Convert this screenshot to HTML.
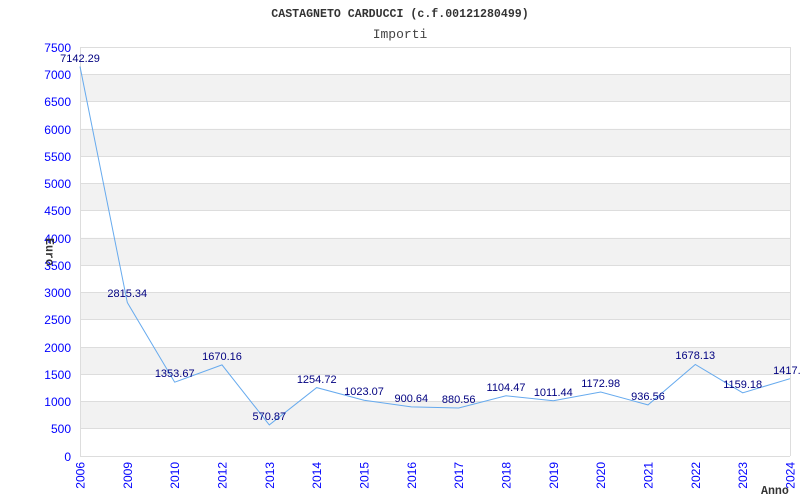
<!DOCTYPE html>
<html><head><meta charset="utf-8"><style>body{margin:0;background:#fff}svg{display:block}</style></head><body>
<svg width="800" height="500" xmlns="http://www.w3.org/2000/svg">
<text x="400" y="17" text-anchor="middle" font-family="Liberation Mono, monospace" font-weight="bold" font-size="11.6" fill="#333">CASTAGNETO CARDUCCI (c.f.00121280499)</text>
<text x="400" y="38" text-anchor="middle" font-family="Liberation Mono, monospace" font-size="13" fill="#444">Importi</text>
<g fill="#f2f2f2">
<rect x="80" y="401.5" width="710" height="27.3"/>
<rect x="80" y="347" width="710" height="27.3"/>
<rect x="80" y="292.4" width="710" height="27.3"/>
<rect x="80" y="237.8" width="710" height="27.3"/>
<rect x="80" y="183.3" width="710" height="27.3"/>
<rect x="80" y="128.8" width="710" height="27.3"/>
<rect x="80" y="74.2" width="710" height="27.3"/>
</g>
<g stroke="#ddd" stroke-width="1">
<line x1="80" x2="790" y1="47.5" y2="47.5"/><line x1="80" x2="790" y1="74.5" y2="74.5"/><line x1="80" x2="790" y1="101.5" y2="101.5"/><line x1="80" x2="790" y1="129.5" y2="129.5"/><line x1="80" x2="790" y1="156.5" y2="156.5"/><line x1="80" x2="790" y1="183.5" y2="183.5"/><line x1="80" x2="790" y1="210.5" y2="210.5"/><line x1="80" x2="790" y1="238.5" y2="238.5"/><line x1="80" x2="790" y1="265.5" y2="265.5"/><line x1="80" x2="790" y1="292.5" y2="292.5"/><line x1="80" x2="790" y1="319.5" y2="319.5"/><line x1="80" x2="790" y1="347.5" y2="347.5"/><line x1="80" x2="790" y1="374.5" y2="374.5"/><line x1="80" x2="790" y1="401.5" y2="401.5"/><line x1="80" x2="790" y1="428.5" y2="428.5"/>
<line x1="80.5" x2="80.5" y1="47" y2="456"/><line x1="790.5" x2="790.5" y1="47" y2="456"/><line x1="80" x2="790" y1="456.5" y2="456.5"/>
</g>
<g font-family="Liberation Sans, sans-serif" font-size="12" fill="#0000ff" text-anchor="end">
<text x="71" y="52">7500</text><text x="71" y="79">7000</text><text x="71" y="106">6500</text><text x="71" y="134">6000</text><text x="71" y="161">5500</text><text x="71" y="188">5000</text><text x="71" y="215">4500</text><text x="71" y="243">4000</text><text x="71" y="270">3500</text><text x="71" y="297">3000</text><text x="71" y="324">2500</text><text x="71" y="352">2000</text><text x="71" y="379">1500</text><text x="71" y="406">1000</text><text x="71" y="433">500</text><text x="71" y="461">0</text>
</g>
<g font-family="Liberation Sans, sans-serif" font-size="12" fill="#0000ff" text-anchor="end">
<text transform="translate(84.5,462) rotate(-90)">2006</text>
<text transform="translate(131.8,462) rotate(-90)">2009</text>
<text transform="translate(179.2,462) rotate(-90)">2010</text>
<text transform="translate(226.5,462) rotate(-90)">2012</text>
<text transform="translate(273.8,462) rotate(-90)">2013</text>
<text transform="translate(321.2,462) rotate(-90)">2014</text>
<text transform="translate(368.5,462) rotate(-90)">2015</text>
<text transform="translate(415.8,462) rotate(-90)">2016</text>
<text transform="translate(463.2,462) rotate(-90)">2017</text>
<text transform="translate(510.5,462) rotate(-90)">2018</text>
<text transform="translate(557.8,462) rotate(-90)">2019</text>
<text transform="translate(605.2,462) rotate(-90)">2020</text>
<text transform="translate(652.5,462) rotate(-90)">2021</text>
<text transform="translate(699.8,462) rotate(-90)">2022</text>
<text transform="translate(747.2,462) rotate(-90)">2023</text>
<text transform="translate(794.5,462) rotate(-90)">2024</text>
</g>
<text transform="translate(46,238) rotate(90)" font-family="Liberation Mono, monospace" font-weight="bold" font-size="11.6" fill="#333">Euro</text>
<text x="761" y="494" font-family="Liberation Mono, monospace" font-weight="bold" font-size="11.6" fill="#333">Anno</text>
<polyline fill="none" stroke="#66aaee" stroke-width="1" points="80,66.5 127.3,302.5 174.7,382.2 222,364.9 269.3,424.9 316.7,387.6 364,400.2 411.3,406.9 458.7,408 506,395.8 553.3,400.8 600.7,392 648,404.9 695.3,364.5 742.7,392.8 790,378.7"/>
<g font-family="Liberation Sans, sans-serif" font-size="11" fill="#000080" text-anchor="middle">
<text x="80" y="62">7142.29</text><text x="127.3" y="297">2815.34</text><text x="174.7" y="377">1353.67</text><text x="222" y="360">1670.16</text><text x="269.3" y="420">570.87</text><text x="316.7" y="383">1254.72</text><text x="364" y="395">1023.07</text><text x="411.3" y="402">900.64</text><text x="458.7" y="403">880.56</text><text x="506" y="391">1104.47</text><text x="553.3" y="396">1011.44</text><text x="600.7" y="387">1172.98</text><text x="648" y="400">936.56</text><text x="695.3" y="359">1678.13</text><text x="742.7" y="388">1159.18</text><text x="790" y="374">1417.5</text>
</g>
</svg>
</body></html>
